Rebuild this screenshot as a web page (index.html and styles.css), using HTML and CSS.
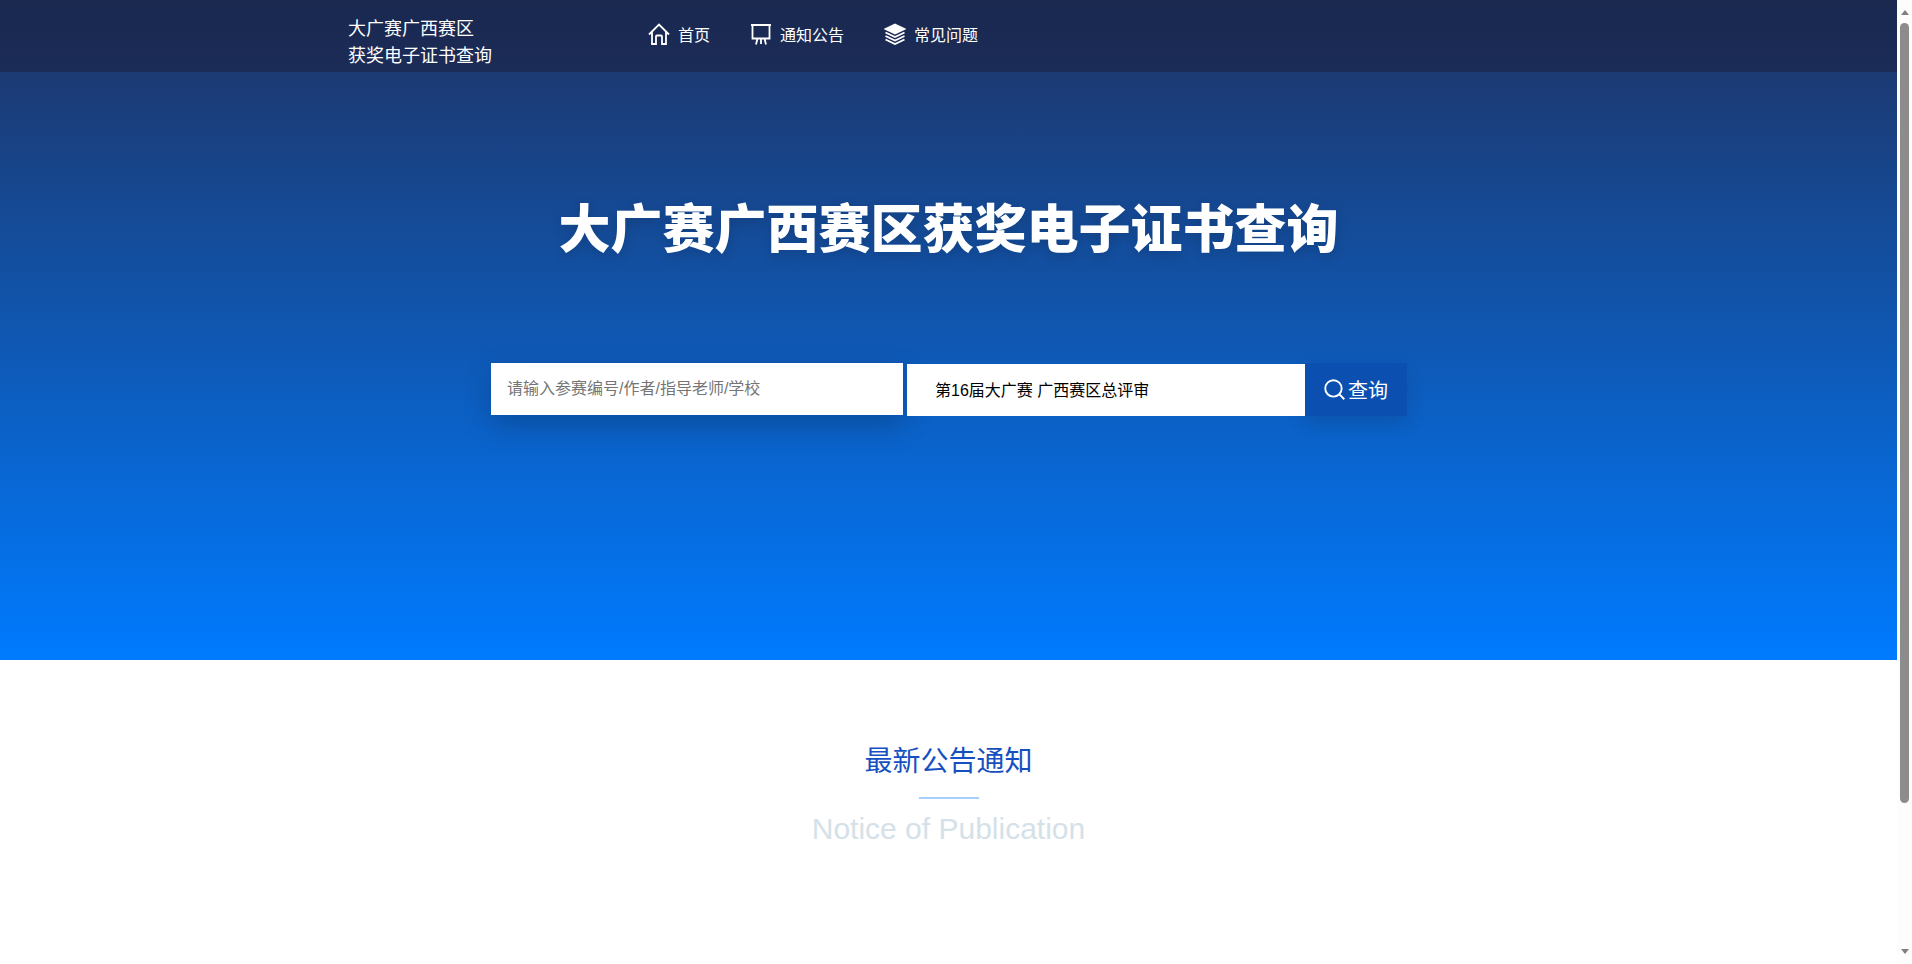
FILE: index.html
```html
<!DOCTYPE html>
<html lang="zh-CN">
<head>
    <meta charset="UTF-8">
    <meta name="viewport" content="width=device-width, initial-scale=1.0">
    <title>大广赛广西赛区获奖电子证书查询</title>
    <link rel="stylesheet" href="styles.css">
</head>
<body>
    <div class="page">
        <header class="topbar">
            <a class="logo" href="#">大广赛广西赛区<br>获奖电子证书查询</a>
            <nav class="nav">
                <a class="nav-item" href="#">
                    <svg class="nav-icon" viewBox="0 0 22 22" fill="none" stroke="currentColor" stroke-width="1.800"><path d="M1 11.500 11 1.500l10 10M4 9V21H8V13.500A1 1 0 0 1 9 12.500H13A1 1 0 0 1 14 13.500V21H18V9"/></svg>
                    首页
                </a>
                <a class="nav-item" href="#">
                    <svg class="nav-icon" viewBox="0 0 22 22" fill="none" stroke="currentColor" stroke-width="1.800"><path d="M1 2H21M2.500 2V15.500H19.500V2M11 15.500V21M6 21.500 7.500 15.500M16 21.500 14.500 15.500"/></svg>
                    通知公告
                </a>
                <a class="nav-item" href="#">
                    <svg class="nav-icon" viewBox="0 0 22 22" fill="none" stroke="currentColor" stroke-width="1.900"><path d="M11 1.500 20.500 6 11 10.500 1.500 6Z" fill="currentColor"/><path d="M1.500 9.500 11 14 20.500 9.500M1.500 13 11 17.500 20.500 13M1.500 16.500 11 21 20.500 16.500"/></svg>
                    常见问题
                </a>
            </nav>
        </header>

        <section class="hero">
            <h1 class="hero-title">大广赛广西赛区获奖电子证书查询</h1>
            <form class="search">
                <input class="search-input" type="text" placeholder="请输入参赛编号/作者/指导老师/学校">
                <div class="search-select">第16届大广赛 广西赛区总评审</div>
                <button class="search-btn" type="button">
                    <svg class="search-icon" viewBox="0 0 20 20" fill="none" stroke="currentColor" stroke-width="1.800"><circle cx="9" cy="9" r="7.800"/><path d="M14.800 14.800l4.500 4.500"/></svg>
                    查询
                </button>
            </form>
        </section>

        <section class="notice">
            <h2 class="notice-title">最新公告通知</h2>
            <div class="notice-line"></div>
            <p class="notice-sub">Notice of Publication</p>
        </section>
    </div>

    <!-- window scrollbar -->
    <div class="scrollbar">
        <span class="arrow-up"></span>
        <span class="thumb"></span>
        <span class="arrow-down"></span>
    </div>
</body>
</html>
```

FILE: styles.css
```css
body {
    display: flex;
    height: 964px;
    margin: 0;
    padding: 0;
    overflow: hidden;
    background-color: #fff;
    font-family: "Liberation Sans", "Noto Sans CJK SC", sans-serif;
}
a {
    color: inherit;
    text-decoration: none;
}
.page {
    flex: 1;
    min-width: 0;
}
.topbar {
    display: flex;
    align-items: center;
    height: 72px;
    padding-left: 348px;
    background: linear-gradient(#1a2850, #1b2c57);
    color: #fff;
}
.logo {
    width: 300px;
    padding-top: 14px;
    font-size: 18px;
    line-height: 27px;
}
.nav {
    display: flex;
    gap: 40px;
    margin-bottom: 4px;
}
.nav-item {
    display: flex;
    align-items: center;
    gap: 8px;
    font-size: 16px;
}
.nav-icon {
    width: 22px;
    height: 22px;
}
.hero {
    height: 588px;
    background: linear-gradient(#1c3a73, #007bff);
    overflow: hidden;
}
.hero-title {
    margin: 128px 0 0;
    text-align: center;
    color: #fff;
    font-size: 52px;
    line-height: 60px;
    font-weight: 900;
    text-shadow: 0 4px 12px rgba(0, 0, 0, 0.15);
}
.search {
    display: flex;
    align-items: center;
    width: 916px;
    margin: 102px 0 0 491px;
}
.search-input {
    width: 412px;
    height: 52px;
    box-sizing: border-box;
    padding: 0 16px;
    border: none;
    outline: none;
    font-family: inherit;
    font-size: 16px;
    box-shadow: 0 10px 30px rgba(0, 0, 0, 0.2);
}
.search-input::placeholder {
    color: #757575;
}
.search-select {
    position: relative;
    z-index: 1;
    width: 398px;
    height: 52px;
    box-sizing: border-box;
    margin: 2px 0 0 4px;
    padding-left: 28px;
    background: #fff;
    color: #000;
    font-size: 16px;
    line-height: 53px;
}
.search-btn {
    display: flex;
    align-items: center;
    justify-content: center;
    gap: 3px;
    width: 102px;
    height: 53px;
    border: none;
    padding: 0;
    background: #0b50b0;
    color: #fff;
    font-family: inherit;
    font-size: 20px;
    box-shadow: 0 8px 20px rgba(0, 0, 0, 0.12);
}
.search-icon {
    width: 21px;
    height: 21px;
}
.notice {
    padding-top: 82px;
    text-align: center;
}
.notice-title {
    margin: 0;
    color: #1650c0;
    font-size: 28px;
    line-height: 40px;
    font-weight: 400;
}
.notice-line {
    width: 60px;
    height: 2px;
    margin: 15px auto 0;
    background-color: #a8d0ff;
}
.notice-sub {
    margin: 10px 0 0;
    color: #d5e1e8;
    font-size: 30px;
    line-height: 40px;
}
.scrollbar {
    display: flex;
    flex-direction: column;
    align-items: center;
    flex: none;
    width: 15px;
    height: 964px;
    box-sizing: border-box;
    padding: 10px 0;
    background-color: #fdfdfd;
}
.arrow-up {
    border-left: 4px solid transparent;
    border-right: 4px solid transparent;
    border-bottom: 5px solid #808080;
}
.arrow-down {
    border-left: 4px solid transparent;
    border-right: 4px solid transparent;
    border-top: 5px solid #808080;
}
.thumb {
    width: 9px;
    height: 780px;
    margin: 8px 0 146px;
    border-radius: 5px;
    background-color: #8c8c8c;
}
```
